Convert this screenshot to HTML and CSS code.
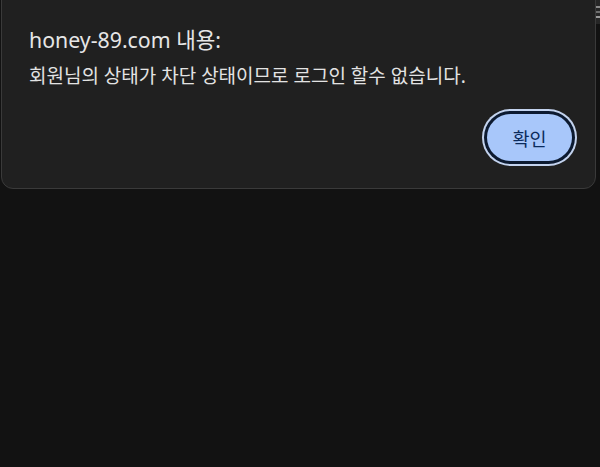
FILE: index.html
```html
<!DOCTYPE html>
<html lang="ko">
<head>
<meta charset="utf-8">
<link rel="stylesheet" href="styles.css">
</head>
<body>
<div class="screen">
  <div class="dialog">
    <div class="title">honey-89.com 내용:</div>
    <div class="message">회원님의 상태가 차단 상태이므로 로그인 할수 없습니다.</div>
    <div class="actions">
      <button class="ok">확인</button>
    </div>
  </div>
  <div class="edge">
    <i class="bar b1"></i>
    <i class="bar b2"></i>
    <i class="bar b3"></i>
  </div>
</div>
</body>
</html>
```
FILE: styles.css
```css
html, body {
  margin: 0;
  padding: 0;
  background: #121212;
  width: 600px;
  height: 467px;
  overflow: hidden;
}
.screen {
  display: flex;
  align-items: flex-start;
}
.dialog {
  box-sizing: border-box;
  width: 595px;
  height: 209px;
  margin: -20px 0 0 1px;
  background: #202020;
  border: 1px solid #3a3a3a;
  border-radius: 12px;
  padding: 45px 22px 0 27px;
  font-family: "Noto Sans", "Noto Sans CJK KR", sans-serif;
  color: #e3e3e3;
}
.title {
  font-size: 21.3px;
  line-height: 28px;
  color: #e6e6e6;
}
.message {
  margin-top: 10px;
  font-size: 19px;
  line-height: 24px;
  color: #e3e3e3;
}
.actions {
  display: flex;
  justify-content: flex-end;
  margin-top: 26px;
  padding-right: 1px;
}
.ok {
  box-sizing: border-box;
  width: 85px;
  height: 47px;
  border: none;
  border-radius: 24px;
  background: #a8c7fa;
  color: #0b2b5c;
  font-family: "Noto Sans", "Noto Sans CJK KR", sans-serif;
  font-size: 18.5px;
  box-shadow: 0 0 0 3px #0c1a30, 0 0 0 5px #c3d3ee;
  padding: 0;
}
.edge {
  width: 4px;
  height: 24px;
  background: #262626;
  display: flex;
  flex-direction: column;
  gap: 3px;
  padding-top: 6px;
  box-sizing: border-box;
}
.bar {
  display: block;
  height: 2px;
  background: #8a8a8a;
}
.b2 { background: #6e6e6e; }
.b3 { background: #9a9a9a; }
```
